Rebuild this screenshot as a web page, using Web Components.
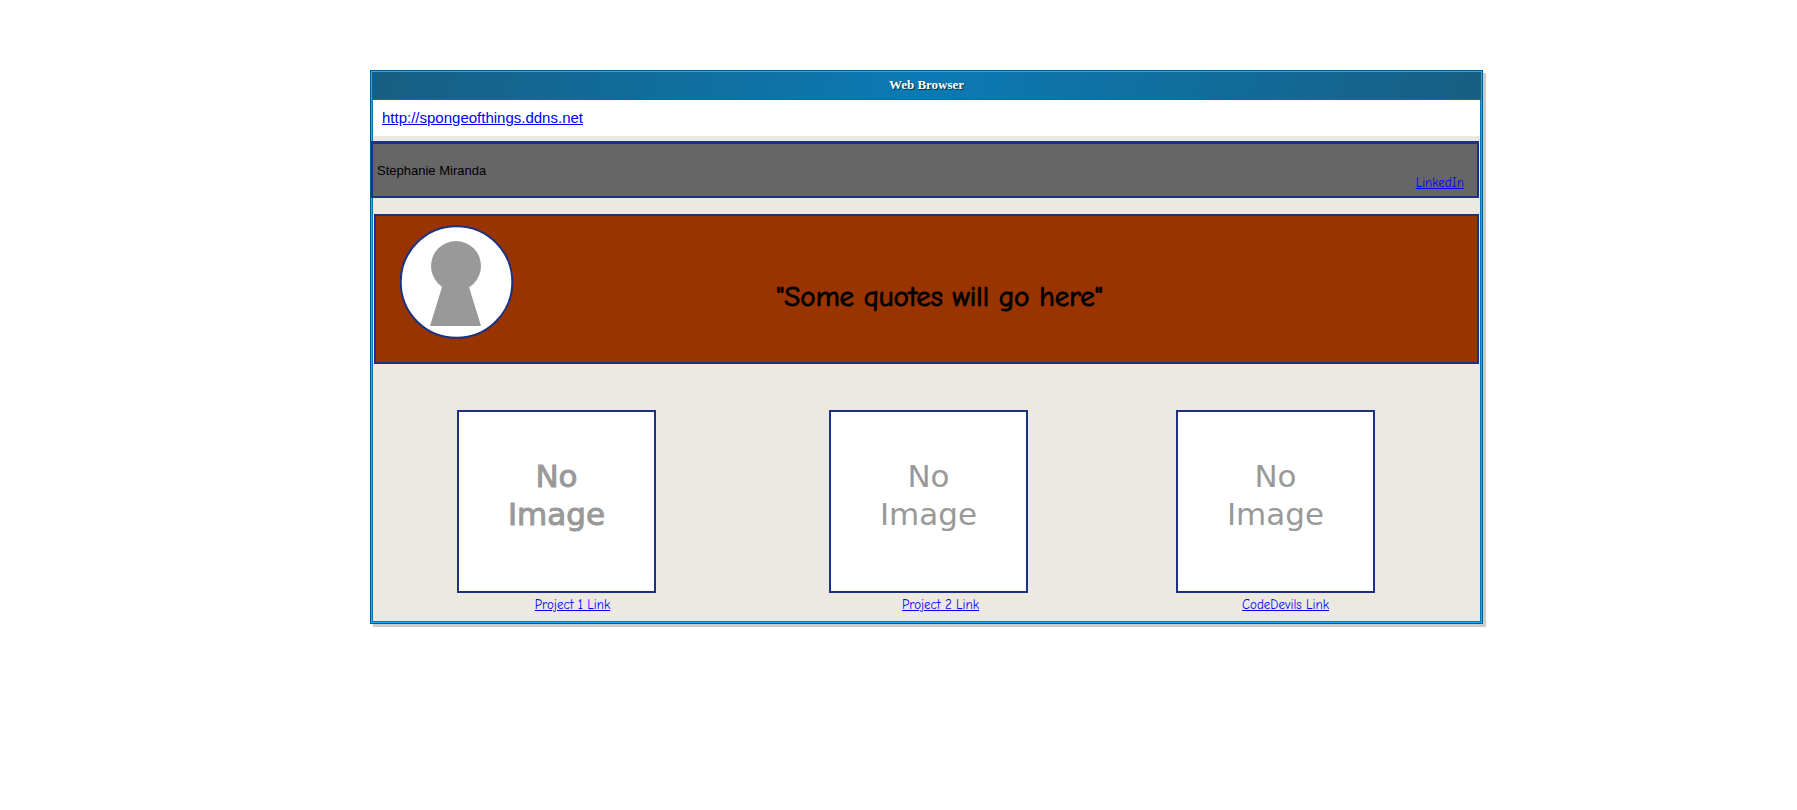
<!DOCTYPE html>
<html lang="en">
<head>
<meta charset="utf-8">
<title>Web Browser</title>
<style>
html, body { margin: 0; background: #fff; }
body { font-family: "Liberation Sans", Arial, sans-serif; color: #000; --line: #1c3280; --hand: "Comic Sans MS", "Comic Neue", "Noto Sans", sans-serif; }
</style>
</head>
<body>
<portfolio-page></portfolio-page>
<script>
class ShadowElement extends HTMLElement {
  constructor() {
    super();
    this.attachShadow({ mode: "open" }).innerHTML = this.constructor.markup;
  }
}

customElements.define("browser-window", class extends ShadowElement {
  static markup = `
    <style>
      :host { display: block; border: 1px solid #00598a; box-shadow: 3px 3px 0 #ccc; }
      .rim { border: 1px solid #1aaeff; }
      header { box-sizing: border-box; height: 28px; border-bottom: 1px solid #0a6fa8; text-align: center;
        background: linear-gradient(100deg, #175f82, #0b7ab5 50%, #175f82); }
      h1 { margin: 0; font: bold 13px/25px "Liberation Serif", "Times New Roman", serif; color: #fff; text-shadow: 1px 1px 1px #033; }
      .body { border: 1px solid #0079b8; border-top: 0; background: #ece9e2; }
      .address { height: 36px; background: #fff; padding-left: 9px; font-size: 15px; line-height: 36px; }
    </style>
    <div class="rim">
      <header><h1><slot name="title"></slot></h1></header>
      <div class="body">
        <div class="address"><slot name="address"></slot></div>
        <slot></slot>
      </div>
    </div>`;
});

customElements.define("profile-bar", class extends ShadowElement {
  static markup = `
    <style>
      :host { display: flex; justify-content: space-between; box-sizing: border-box; height: 57px; position: relative;
        margin: 5px 1px 0 -2px; padding: 0 13px 0 4px; background: #666; border: 2px solid var(--line); border-top-width: 3px; }
      .name { align-self: center; font-size: 13px; }
      .link { align-self: flex-end; font: 13px/16px var(--hand); padding-bottom: 5px; }
    </style>
    <span class="name"><slot></slot></span>
    <span class="link"><slot name="link"></slot></span>`;
});

customElements.define("quote-banner", class extends ShadowElement {
  static markup = `
    <style>
      :host { display: grid; grid-template-columns: 114px 1fr 112px; box-sizing: border-box; height: 150px;
        margin: 16px 1px 0; padding: 9px 0 0 24px; background: #993300; border: 2px solid var(--line); }
      svg { display: block; }
      p { margin: 0; padding-top: 16px; height: 112px; font: 29px/112px var(--hand); text-align: center; -webkit-text-stroke: 1px #000; }
    </style>
    <svg width="114" height="114" viewBox="0 0 114 114" aria-hidden="true">
      <circle cx="56.5" cy="57" r="55.8" fill="#fff" stroke="#1c3280" stroke-width="2"/>
      <circle cx="56" cy="41" r="25" fill="#999"/>
      <path d="M42 62h27l12 39H30z" fill="#999"/>
    </svg>
    <p><slot></slot></p>`;
});

customElements.define("image-placeholder", class extends ShadowElement {
  static markup = `
    <style>
      :host { display: grid; place-content: center; box-sizing: border-box; height: 183px; padding-bottom: 14px;
        background: #fff; border: 2px solid var(--line); color: #999;
        font: 31px/38px "DejaVu Sans", sans-serif; text-align: center; }
      :host([heavy]) { -webkit-text-stroke: 1px #999; }
    </style>
    <span>No</span><span>Image</span>`;
});

customElements.define("portfolio-page", class extends ShadowElement {
  static markup = `
    <style>
      :host { display: grid; grid-template-columns: 370fr 1113fr 314fr; padding: 70px 0; }
      browser-window { grid-column: 2; }
      a { color: #00f; }
      .pictures { display: grid; margin-top: 46px;
        grid-template-columns: 84fr 199fr 173fr 199fr 148fr 199fr 105fr; }
      .pictures :nth-child(1) { grid-column: 2; }
      .pictures :nth-child(2) { grid-column: 4; }
      .pictures :nth-child(3) { grid-column: 6; }
      nav { display: grid; grid-template-columns: 161fr 77fr 290fr 79fr 262fr 87fr 151fr; justify-items: center;
        padding: 4px 0 8px; font: 13px/16px var(--hand); white-space: nowrap; }
      nav :nth-child(1) { grid-column: 2; }
      nav :nth-child(2) { grid-column: 4; }
      nav :nth-child(3) { grid-column: 6; }
    </style>
    <browser-window>
      <span slot="title">Web Browser</span>
      <a slot="address" href="http://spongeofthings.ddns.net">http://spongeofthings.ddns.net</a>
      <profile-bar>Stephanie Miranda<a slot="link" href="#linkedin">LinkedIn</a></profile-bar>
      <quote-banner>"Some quotes will go here"</quote-banner>
      <div class="pictures">
        <image-placeholder heavy></image-placeholder>
        <image-placeholder></image-placeholder>
        <image-placeholder></image-placeholder>
      </div>
      <nav>
        <a href="#project-1">Project 1 Link</a>
        <a href="#project-2">Project 2 Link</a>
        <a href="#codedevils">CodeDevils Link</a>
      </nav>
    </browser-window>`;
});
</script>
</body>
</html>
